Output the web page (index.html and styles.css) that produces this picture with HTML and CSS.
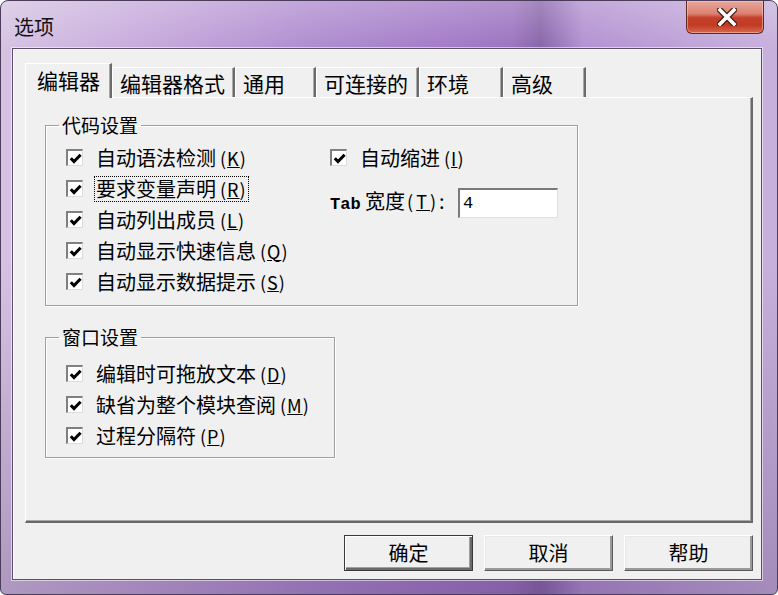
FILE: index.html
```html
<!DOCTYPE html>
<html lang="zh-CN">
<head>
<meta charset="utf-8">
<title>选项</title>
<link rel="stylesheet" href="styles.css">
</head>
<body>
<div class="window">
  <div class="titlebar">
    <span class="title">选项</span>
    <button class="close" aria-label="关闭">
      <svg width="20" height="18" viewBox="0 0 20 18">
        <path d="M3 2 L17 16 M17 2 L3 16" stroke="#3a1a14" stroke-width="6" stroke-linecap="square" fill="none"/>
        <path d="M3 2 L17 16 M17 2 L3 16" stroke="#ffffff" stroke-width="3.6" stroke-linecap="square" fill="none"/>
      </svg>
    </button>
  </div>
  <div class="client">
    <div class="tabs">
      <div class="tab active w1">编辑器</div>
      <div class="tab w2">编辑器格式</div>
      <div class="tab w3">通用</div>
      <div class="tab w4">可连接的</div>
      <div class="tab w5">环境</div>
      <div class="tab w6">高级</div>
    </div>
    <div class="panel">
      <fieldset class="group g1">
        <legend>代码设置</legend>
        <div class="g1-body">
          <div class="col col-left">
            <label class="cb"><span class="box"><svg width="13" height="13" viewBox="0 0 13 13"><path d="M1.8 6.2 L5 9.6 L11.6 2.8" stroke="#000" stroke-width="3" fill="none"/></svg></span><span class="txt">自动语法检测<span class="key">(<u>K</u>)</span></span></label>
            <label class="cb"><span class="box"><svg width="13" height="13" viewBox="0 0 13 13"><path d="M1.8 6.2 L5 9.6 L11.6 2.8" stroke="#000" stroke-width="3" fill="none"/></svg></span><span class="txt focus">要求变量声明<span class="key">(<u>R</u>)</span></span></label>
            <label class="cb"><span class="box"><svg width="13" height="13" viewBox="0 0 13 13"><path d="M1.8 6.2 L5 9.6 L11.6 2.8" stroke="#000" stroke-width="3" fill="none"/></svg></span><span class="txt">自动列出成员<span class="key">(<u>L</u>)</span></span></label>
            <label class="cb"><span class="box"><svg width="13" height="13" viewBox="0 0 13 13"><path d="M1.8 6.2 L5 9.6 L11.6 2.8" stroke="#000" stroke-width="3" fill="none"/></svg></span><span class="txt">自动显示快速信息<span class="key">(<u>Q</u>)</span></span></label>
            <label class="cb"><span class="box"><svg width="13" height="13" viewBox="0 0 13 13"><path d="M1.8 6.2 L5 9.6 L11.6 2.8" stroke="#000" stroke-width="3" fill="none"/></svg></span><span class="txt">自动显示数据提示<span class="key">(<u>S</u>)</span></span></label>
          </div>
          <div class="col col-right">
            <label class="cb"><span class="box"><svg width="13" height="13" viewBox="0 0 13 13"><path d="M1.8 6.2 L5 9.6 L11.6 2.8" stroke="#000" stroke-width="3" fill="none"/></svg></span><span class="txt">自动缩进<span class="key">(<u>I</u>)</span></span></label>
            <div class="tabwidth">
              <span class="lbl"><span class="mono">Tab</span> 宽度<span class="key">(<u>T</u>)</span>:</span>
              <span class="input"><span class="mono">4</span></span>
            </div>
          </div>
        </div>
      </fieldset>
      <fieldset class="group g2">
        <legend>窗口设置</legend>
        <div class="g2-body">
          <label class="cb"><span class="box"><svg width="13" height="13" viewBox="0 0 13 13"><path d="M1.8 6.2 L5 9.6 L11.6 2.8" stroke="#000" stroke-width="3" fill="none"/></svg></span><span class="txt">编辑时可拖放文本<span class="key">(<u>D</u>)</span></span></label>
          <label class="cb"><span class="box"><svg width="13" height="13" viewBox="0 0 13 13"><path d="M1.8 6.2 L5 9.6 L11.6 2.8" stroke="#000" stroke-width="3" fill="none"/></svg></span><span class="txt">缺省为整个模块查阅<span class="key">(<u>M</u>)</span></span></label>
          <label class="cb"><span class="box"><svg width="13" height="13" viewBox="0 0 13 13"><path d="M1.8 6.2 L5 9.6 L11.6 2.8" stroke="#000" stroke-width="3" fill="none"/></svg></span><span class="txt">过程分隔符<span class="key">(<u>P</u>)</span></span></label>
        </div>
      </fieldset>
    </div>
    <div class="buttons">
      <button class="btn default">确定</button>
      <button class="btn">取消</button>
      <button class="btn">帮助</button>
    </div>
  </div>
</div>
</body>
</html>
```

FILE: styles.css
```css
* { box-sizing: border-box; }

html, body {
  margin: 0;
  padding: 0;
  background: #ffffff;
}

body {
  width: 778px;
  height: 595px;
  overflow: hidden;
  font-family: "Noto Sans CJK SC", "Noto Sans", sans-serif;
  font-size: 20px;
  color: #000;
}

.window {
  width: 778px;
  height: 595px;
  border: 1px solid #4b3d5a;
  border-radius: 8px 8px 6px 6px;
  padding: 0 15px 14px 11px;
  display: flex;
  flex-direction: column;
  background:
    linear-gradient(to bottom, rgba(255,255,255,0.22) 0, rgba(255,255,255,0) 46px, rgba(70,40,100,0) 260px, rgba(70,40,100,0.28) 100%),
    linear-gradient(to right, #d6c3e3 0%, #c7abdc 18%, #b08dd0 40%, #a47bc8 58%, #9c74c0 66%, #8a66a9 69.5%, #9471b6 71%, #b392d1 75%, #bea3d8 88%, #c8b2dc 100%);
}

.titlebar {
  height: 47px;
  display: flex;
  align-items: flex-start;
  flex: none;
}

.title {
  margin-top: 12px;
  margin-left: 2px;
  font-size: 20px;
  line-height: 28px;
  color: #111;
}

.close {
  margin-left: auto;
  margin-right: -2px;
  margin-top: 0;
  width: 78px;
  height: 33px;
  padding: 0;
  border: 1px solid #5e2a24;
  border-top: none;
  border-radius: 0 0 6px 6px;
  background: linear-gradient(to bottom, #e7a89c 0%, #dc8070 40%, #c5412c 52%, #c13a24 75%, #d86a4e 100%);
  box-shadow: inset 0 0 0 1px rgba(255,220,210,0.45);
  display: flex;
  align-items: center;
  justify-content: center;
}

.close svg { display: block; margin-left: 4px; }

.client {
  flex: 1;
  background: #f0f0f0;
  border: 1px solid #5d4b70;
  box-shadow: 0 0 0 1px rgba(255,255,255,0.55), inset 1px 1px 0 #ffffff;
  padding: 14px 8px 0 12px;
  display: flex;
  flex-direction: column;
}

.tabs {
  display: flex;
  align-items: flex-end;
  height: 34px;
  position: relative;
  z-index: 1;
}

.tab {
  height: 30px;
  display: flex;
  align-items: center;
  padding-left: 7px;
  background: #f0f0f0;
  border-top: 1px solid #ffffff;
  border-left: 1px solid #ffffff;
  border-right: 2px solid #6b6b6b;
  box-shadow: inset -1px 0 0 #a8a8a8;
  line-height: 28px;
  font-size: 21px;
  white-space: nowrap;
}

.tab.active {
  height: 35px;
  margin-bottom: -1px;
  padding-left: 11px;
  padding-bottom: 2px;
}

.w1 { width: 87px; }
.w2 { width: 123px; }
.w3 { width: 81px; }
.w4 { width: 103px; }
.w5 { width: 84px; }
.w6 { width: 83px; }

.panel {
  height: 426px;
  border-top: 1px solid #ffffff;
  border-left: 1px solid #ffffff;
  border-right: 2px solid #696969;
  border-bottom: 2px solid #696969;
  box-shadow: inset -1px -1px 0 #a8a8a8;
  padding: 15px 0 0 19px;
  display: flex;
  flex-direction: column;
  align-items: flex-start;
}

.group {
  margin: 0;
  padding: 0;
  border: 1px solid #a0a0a0;
  box-shadow: 1px 1px 0 #ffffff, inset 1px 1px 0 #ffffff;
  min-width: 0;
}

.group legend {
  margin-left: 13px;
  padding: 0 3px;
  line-height: 24px;
  font-size: 19px;
}

.g1 { width: 533px; }

.g1-body {
  display: flex;
  padding: 5px 0 8px 20px;
}

.col { display: flex; flex-direction: column; }
.col-left { width: 264px; }

.g2 {
  width: 290px;
  margin-top: 19px;
}

.g2-body {
  display: flex;
  flex-direction: column;
  padding: 9px 0 6px 20px;
}

.cb {
  height: 31px;
  display: flex;
  align-items: center;
  white-space: nowrap;
}

.box {
  width: 17px;
  height: 17px;
  flex: none;
  background: #ffffff;
  border-top: 2px solid #808080;
  border-left: 2px solid #808080;
  border-right: 1px solid #dcdcdc;
  border-bottom: 1px solid #dcdcdc;
  display: flex;
  align-items: center;
  justify-content: center;
  margin-right: 12px;
}

.box svg { display: block; }

.txt {
  line-height: 24px;
  padding: 0 1px;
}

.txt.focus {
  outline: 1px dotted #000;
}

.key {
  margin-left: 4px;
  font-size: 18px;
  letter-spacing: 1px;
}

.key u {
  text-decoration-thickness: 1px;
  text-underline-offset: 1px;
}

.tabwidth {
  margin-top: 15px;
  display: flex;
  align-items: center;
  height: 30px;
  white-space: nowrap;
}

.lbl {
  line-height: 24px;
  min-width: 122px;
}

.lbl .key { margin-left: 2px; letter-spacing: 3px; }

.mono {
  font-family: "Liberation Mono", monospace;
  font-size: 17px;
  font-weight: bold;
}

.input {
  margin-left: 6px;
  width: 100px;
  height: 30px;
  background: #ffffff;
  border-top: 2px solid #7a7a7a;
  border-left: 2px solid #7a7a7a;
  border-right: 1px solid #e0e0e0;
  border-bottom: 1px solid #e0e0e0;
  padding-left: 3px;
  display: flex;
  align-items: center;
}

.input .mono { font-weight: normal; }

.buttons {
  margin-top: 12px;
  display: flex;
  justify-content: flex-end;
  gap: 11px;
}

.btn {
  width: 129px;
  height: 36px;
  font-family: "Noto Sans CJK SC", sans-serif;
  font-size: 20px;
  line-height: 24px;
  color: #000;
  background: #f0f0f0;
  border: 1px solid;
  border-color: #ffffff #5a5a5a #5a5a5a #ffffff;
  box-shadow: inset -2px -2px 0 #9a9a9a, inset 1px 1px 0 #e8e8e8;
  padding: 0;
}

.btn.default {
  border: 1px solid #3a3a3a;
  box-shadow: inset 1px 1px 0 #ffffff, inset -2px -2px 0 #6a6a6a, inset -3px -3px 0 #a0a0a0;
}
```
